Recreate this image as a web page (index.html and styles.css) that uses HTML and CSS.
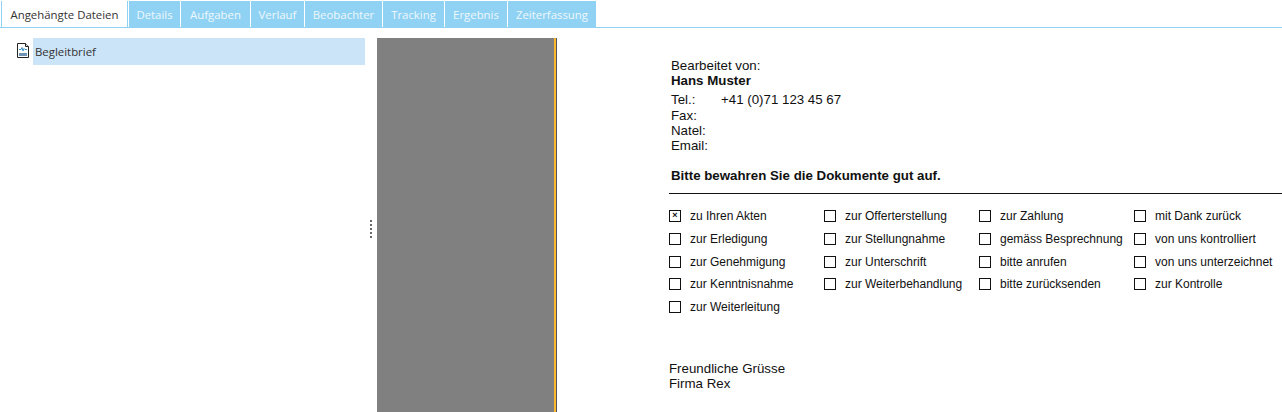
FILE: index.html
```html
<!DOCTYPE html>
<html lang="de">
<head>
    <meta charset="UTF-8">
    <title>Angehängte Dateien</title>
    <link rel="stylesheet" href="styles.css">
</head>
<body>
    <div class="tabs">
        <div class="tab tab-active">Angehängte Dateien</div>
        <div class="tab tab-details">Details</div>
        <div class="tab tab-aufgaben">Aufgaben</div>
        <div class="tab tab-verlauf">Verlauf</div>
        <div class="tab tab-beobachter">Beobachter</div>
        <div class="tab tab-tracking">Tracking</div>
        <div class="tab tab-ergebnis">Ergebnis</div>
        <div class="tab tab-zeit">Zeiterfassung</div>
    </div>

    <div class="main">
        <div class="files">
            <svg class="file-icon" width="14" height="15" viewBox="0 0 14 15">
                <path d="M1.5 .5H9.5L12.5 3.5V14.5H1.5Z" fill="#fff" stroke="#222"/>
                <path d="M9.5 .5V3.5H12.5" fill="#ddd" stroke="#222"/>
                <path d="M3 6.5H5L6 4.5L7 8L8 5.5L9 6.5H11" fill="none" stroke="#3d8fc9"/>
                <path d="M3 10H11V13H3Z" fill="#6f93b5"/>
            </svg>
            <div class="file-row">Begleitbrief</div>
        </div>
        <div class="splitter">
            <div class="grip"></div>
        </div>
        <div class="preview-bg"></div>
        <div class="preview-edge"></div>

        <div class="doc">
            <div class="sender">
                <div>Bearbeitet von:</div>
                <div class="sender-name">Hans Muster</div>
                <div class="contact">
                    <div class="contact-row tel"><span class="contact-label">Tel.:</span><span>+41 (0)71 123 45 67</span></div>
                    <div class="contact-row">Fax:</div>
                    <div class="contact-row">Natel:</div>
                    <div class="contact-row">Email:</div>
                </div>
                <div class="notice">Bitte bewahren Sie die Dokumente gut auf.</div>
            </div>
            <div class="rule"></div>
            <div class="checks">
                <div class="check"><span class="box box-x">×</span>zu Ihren Akten</div>
                <div class="check"><span class="box"></span>zur Offerterstellung</div>
                <div class="check"><span class="box"></span>zur Zahlung</div>
                <div class="check"><span class="box"></span>mit Dank zurück</div>
                <div class="check"><span class="box"></span>zur Erledigung</div>
                <div class="check"><span class="box"></span>zur Stellungnahme</div>
                <div class="check"><span class="box"></span>gemäss Besprechnung</div>
                <div class="check"><span class="box"></span>von uns kontrolliert</div>
                <div class="check"><span class="box"></span>zur Genehmigung</div>
                <div class="check"><span class="box"></span>zur Unterschrift</div>
                <div class="check"><span class="box"></span>bitte anrufen</div>
                <div class="check"><span class="box"></span>von uns unterzeichnet</div>
                <div class="check"><span class="box"></span>zur Kenntnisnahme</div>
                <div class="check"><span class="box"></span>zur Weiterbehandlung</div>
                <div class="check"><span class="box"></span>bitte zurücksenden</div>
                <div class="check"><span class="box"></span>zur Kontrolle</div>
                <div class="check"><span class="box"></span>zur Weiterleitung</div>
            </div>
            <div class="closing">
                <div>Freundliche Grüsse</div>
                <div>Firma Rex</div>
            </div>
        </div>
    </div>
</body>
</html>
```
FILE: styles.css
```css
html, body {
    margin: 0;
    padding: 0;
    height: 412px;
    overflow: hidden;
    background: white;
}

/* Tabs */
.tabs {
    display: flex;
    height: 28px;
    box-sizing: border-box;
    padding: 1px 0 0 1px;
    border-bottom: 1px solid #90d2f3;
    font-family: "Open Sans", sans-serif;
    font-size: 11.4px;
}

.tab {
    flex: none;
    box-sizing: border-box;
    height: 26px;
    line-height: 27px;
    text-align: center;
    color: #eef8fd;
    background: #90d2f3;
    margin-right: 1px;
}

.tab-active {
    width: 127px;
    height: 26px;
    color: #333;
    background: white;
    border-left: 1px solid #90d2f3;
    border-right: 1px solid #90d2f3;
}

.tab-details { width: 51px; }
.tab-aufgaben { width: 69px; }
.tab-verlauf { width: 53px; }
.tab-beobachter { width: 77px; }
.tab-tracking { width: 61px; }
.tab-ergebnis { width: 62px; }
.tab-zeit { width: 88px; margin-right: 0; }

/* Main */
.main {
    display: flex;
    height: 384px;
}

.files {
    flex: none;
    width: 365px;
    box-sizing: border-box;
    display: flex;
    align-items: flex-start;
    padding: 10px 0 0 16px;
}

.file-icon {
    flex: none;
    margin: 5px 3px 0 0;
}

.file-row {
    flex: 1;
    height: 27px;
    line-height: 27px;
    padding-left: 2px;
    background: #cce4f8;
    color: #333;
    font-family: "Open Sans", sans-serif;
    font-size: 11.4px;
}

.splitter {
    flex: none;
    width: 12px;
    display: flex;
    align-items: center;
    justify-content: center;
}

.grip {
    width: 2px;
    height: 18px;
    margin-top: 18px;
    background: repeating-linear-gradient(#666 0, #666 2px, transparent 2px, transparent 4px);
}

.preview-bg {
    flex: none;
    width: 177px;
    margin-top: 10px;
    background: #808080;
}

.preview-edge {
    flex: none;
    width: 3px;
    margin-top: 10px;
    background: #fdb92e;
    border-right: 1px solid #555;
    box-sizing: border-box;
}

/* Dokument */
.doc {
    flex: 1;
    padding: 30px 0 0 112px;
    font-family: "Liberation Sans", Arial, sans-serif;
    font-size: 13.3px;
    color: #111;
}

.sender {
    padding-left: 2px;
    line-height: 15px;
}

.sender-name {
    font-weight: bold;
}

.contact {
    margin-top: 4px;
}

.contact-row {
    display: flex;
}

.tel {
    margin-bottom: 1px;
}

.contact-label {
    width: 50px;
}

.notice {
    margin-top: 15px;
    font-weight: bold;
}

.rule {
    height: 1px;
    margin-top: 10px;
    background: #111;
}

.checks {
    display: grid;
    grid-template-columns: repeat(4, 155px);
    grid-auto-rows: 22.75px;
    margin-top: 10.75px;
    font-size: 12px;
}

.check {
    display: flex;
    align-items: center;
}

.box {
    flex: none;
    box-sizing: border-box;
    width: 12px;
    height: 12px;
    margin-right: 9px;
    border: 1px solid #111;
    font-size: 9px;
    font-weight: bold;
    line-height: 9px;
    text-align: center;
}

.closing {
    margin-top: 42.25px;
    line-height: 15px;
}
```
